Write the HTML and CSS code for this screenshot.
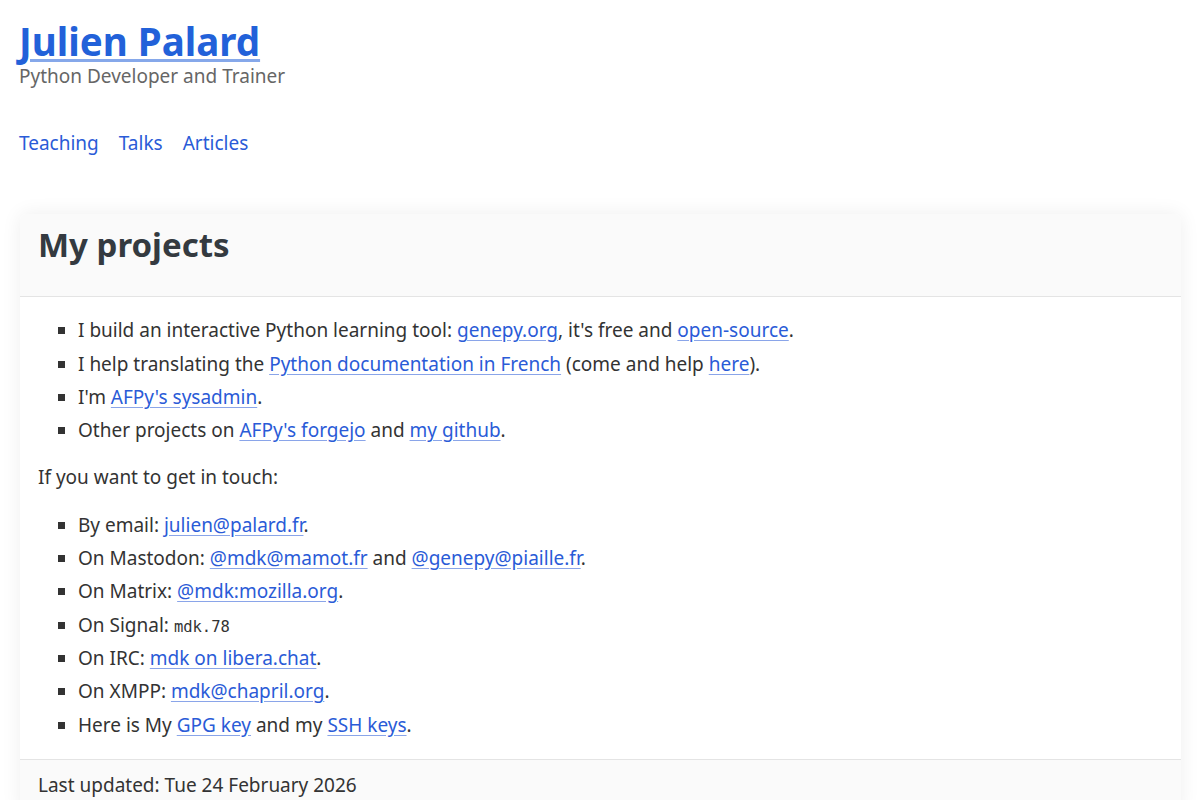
FILE: index.html
```html
<!DOCTYPE html>
<html lang="en">
<head>
    <meta charset="UTF-8">
    <meta name="viewport" content="width=device-width, initial-scale=1.0">
    <title>Julien Palard</title>
    <link rel="stylesheet" href="styles.css">
</head>
<body>
    <header class="site-header">
        <h1 class="site-title"><a href="#">Julien Palard</a></h1>
        <p class="site-subtitle">Python Developer and Trainer</p>
        <nav class="site-nav">
            <a href="#">Teaching</a>
            <a href="#">Talks</a>
            <a href="#">Articles</a>
        </nav>
    </header>

    <main class="card">
        <div class="card-header">
            <h2>My projects</h2>
        </div>
        <div class="card-body">
            <ul>
                <li>I build an interactive Python learning tool: <a href="#">genepy.org</a>, it's free and <a href="#">open-source</a>.</li>
                <li>I help translating the <a href="#">Python documentation in French</a> (come and help <a href="#">here</a>).</li>
                <li>I'm <a href="#">AFPy's sysadmin</a>.</li>
                <li>Other projects on <a href="#">AFPy's forgejo</a> and <a href="#">my github</a>.</li>
            </ul>
            <p>If you want to get in touch:</p>
            <ul>
                <li>By email: <a href="#">julien@palard.fr</a>.</li>
                <li>On Mastodon: <a href="#">@mdk@mamot.fr</a> and <a href="#">@genepy@piaille.fr</a>.</li>
                <li>On Matrix: <a href="#">@mdk:mozilla.org</a>.</li>
                <li>On Signal: <code>mdk.78</code></li>
                <li>On IRC: <a href="#">mdk on libera.chat</a>.</li>
                <li>On XMPP: <a href="#">mdk@chapril.org</a>.</li>
                <li>Here is My <a href="#">GPG key</a> and my <a href="#">SSH keys</a>.</li>
            </ul>
        </div>
        <div class="card-footer">
            Last updated: Tue 24 February 2026
        </div>
    </main>
</body>
</html>
```

FILE: styles.css
```css
body {
    font-family: "Noto Sans", sans-serif;
    font-size: 19px;
    line-height: 33.3px;
    margin: 0;
    padding: 0 19px 40px 19px;
    background-color: #fff;
    color: #333;
}

a {
    color: #2a5bd7;
    text-decoration-color: rgba(42, 91, 215, 0.55);
    text-underline-offset: 3px;
}

.site-header {
    padding-top: 19px;
    padding-bottom: 54px;
}

.site-title {
    margin: 0;
    font-size: 38.5px;
    line-height: 44px;
    font-weight: 700;
}

.site-title a {
    color: #2261d9;
    text-decoration-thickness: 3px;
    text-decoration-color: rgba(34, 97, 217, 0.55);
    text-underline-offset: 3px;
}

.site-subtitle {
    margin: 0;
    color: #666;
    line-height: 26px;
}

.site-nav {
    display: flex;
    gap: 20px;
    margin-top: 38px;
}

.site-nav a {
    text-decoration: none;
}

.card {
    display: block;
    margin-left: 1px;
    background: #fff;
    border-radius: 6px;
    box-shadow: 0 0 20px rgba(0, 0, 0, 0.07);
}

.card-header {
    background: #fafafa;
    border-bottom: 1px solid #e4e4e4;
    border-radius: 6px 6px 0 0;
    padding: 7px 18px 27px;
}

.card-header h2 {
    margin: 0;
    font-size: 33px;
    line-height: 48px;
    font-weight: 700;
    color: #343a40;
}

.card-body {
    padding: 17px 18px 3px;
}

.card-body ul {
    list-style: square;
    margin: 0 0 14px;
    padding-left: 40px;
}

.card-body p {
    margin: 0 0 14px;
}

code {
    font-family: "DejaVu Sans Mono", monospace;
    font-size: 15.5px;
    line-height: 1;
}

.card-footer {
    background: #fafafa;
    border-top: 1px solid #e4e4e4;
    padding: 9px 18px 12px;
}
```
